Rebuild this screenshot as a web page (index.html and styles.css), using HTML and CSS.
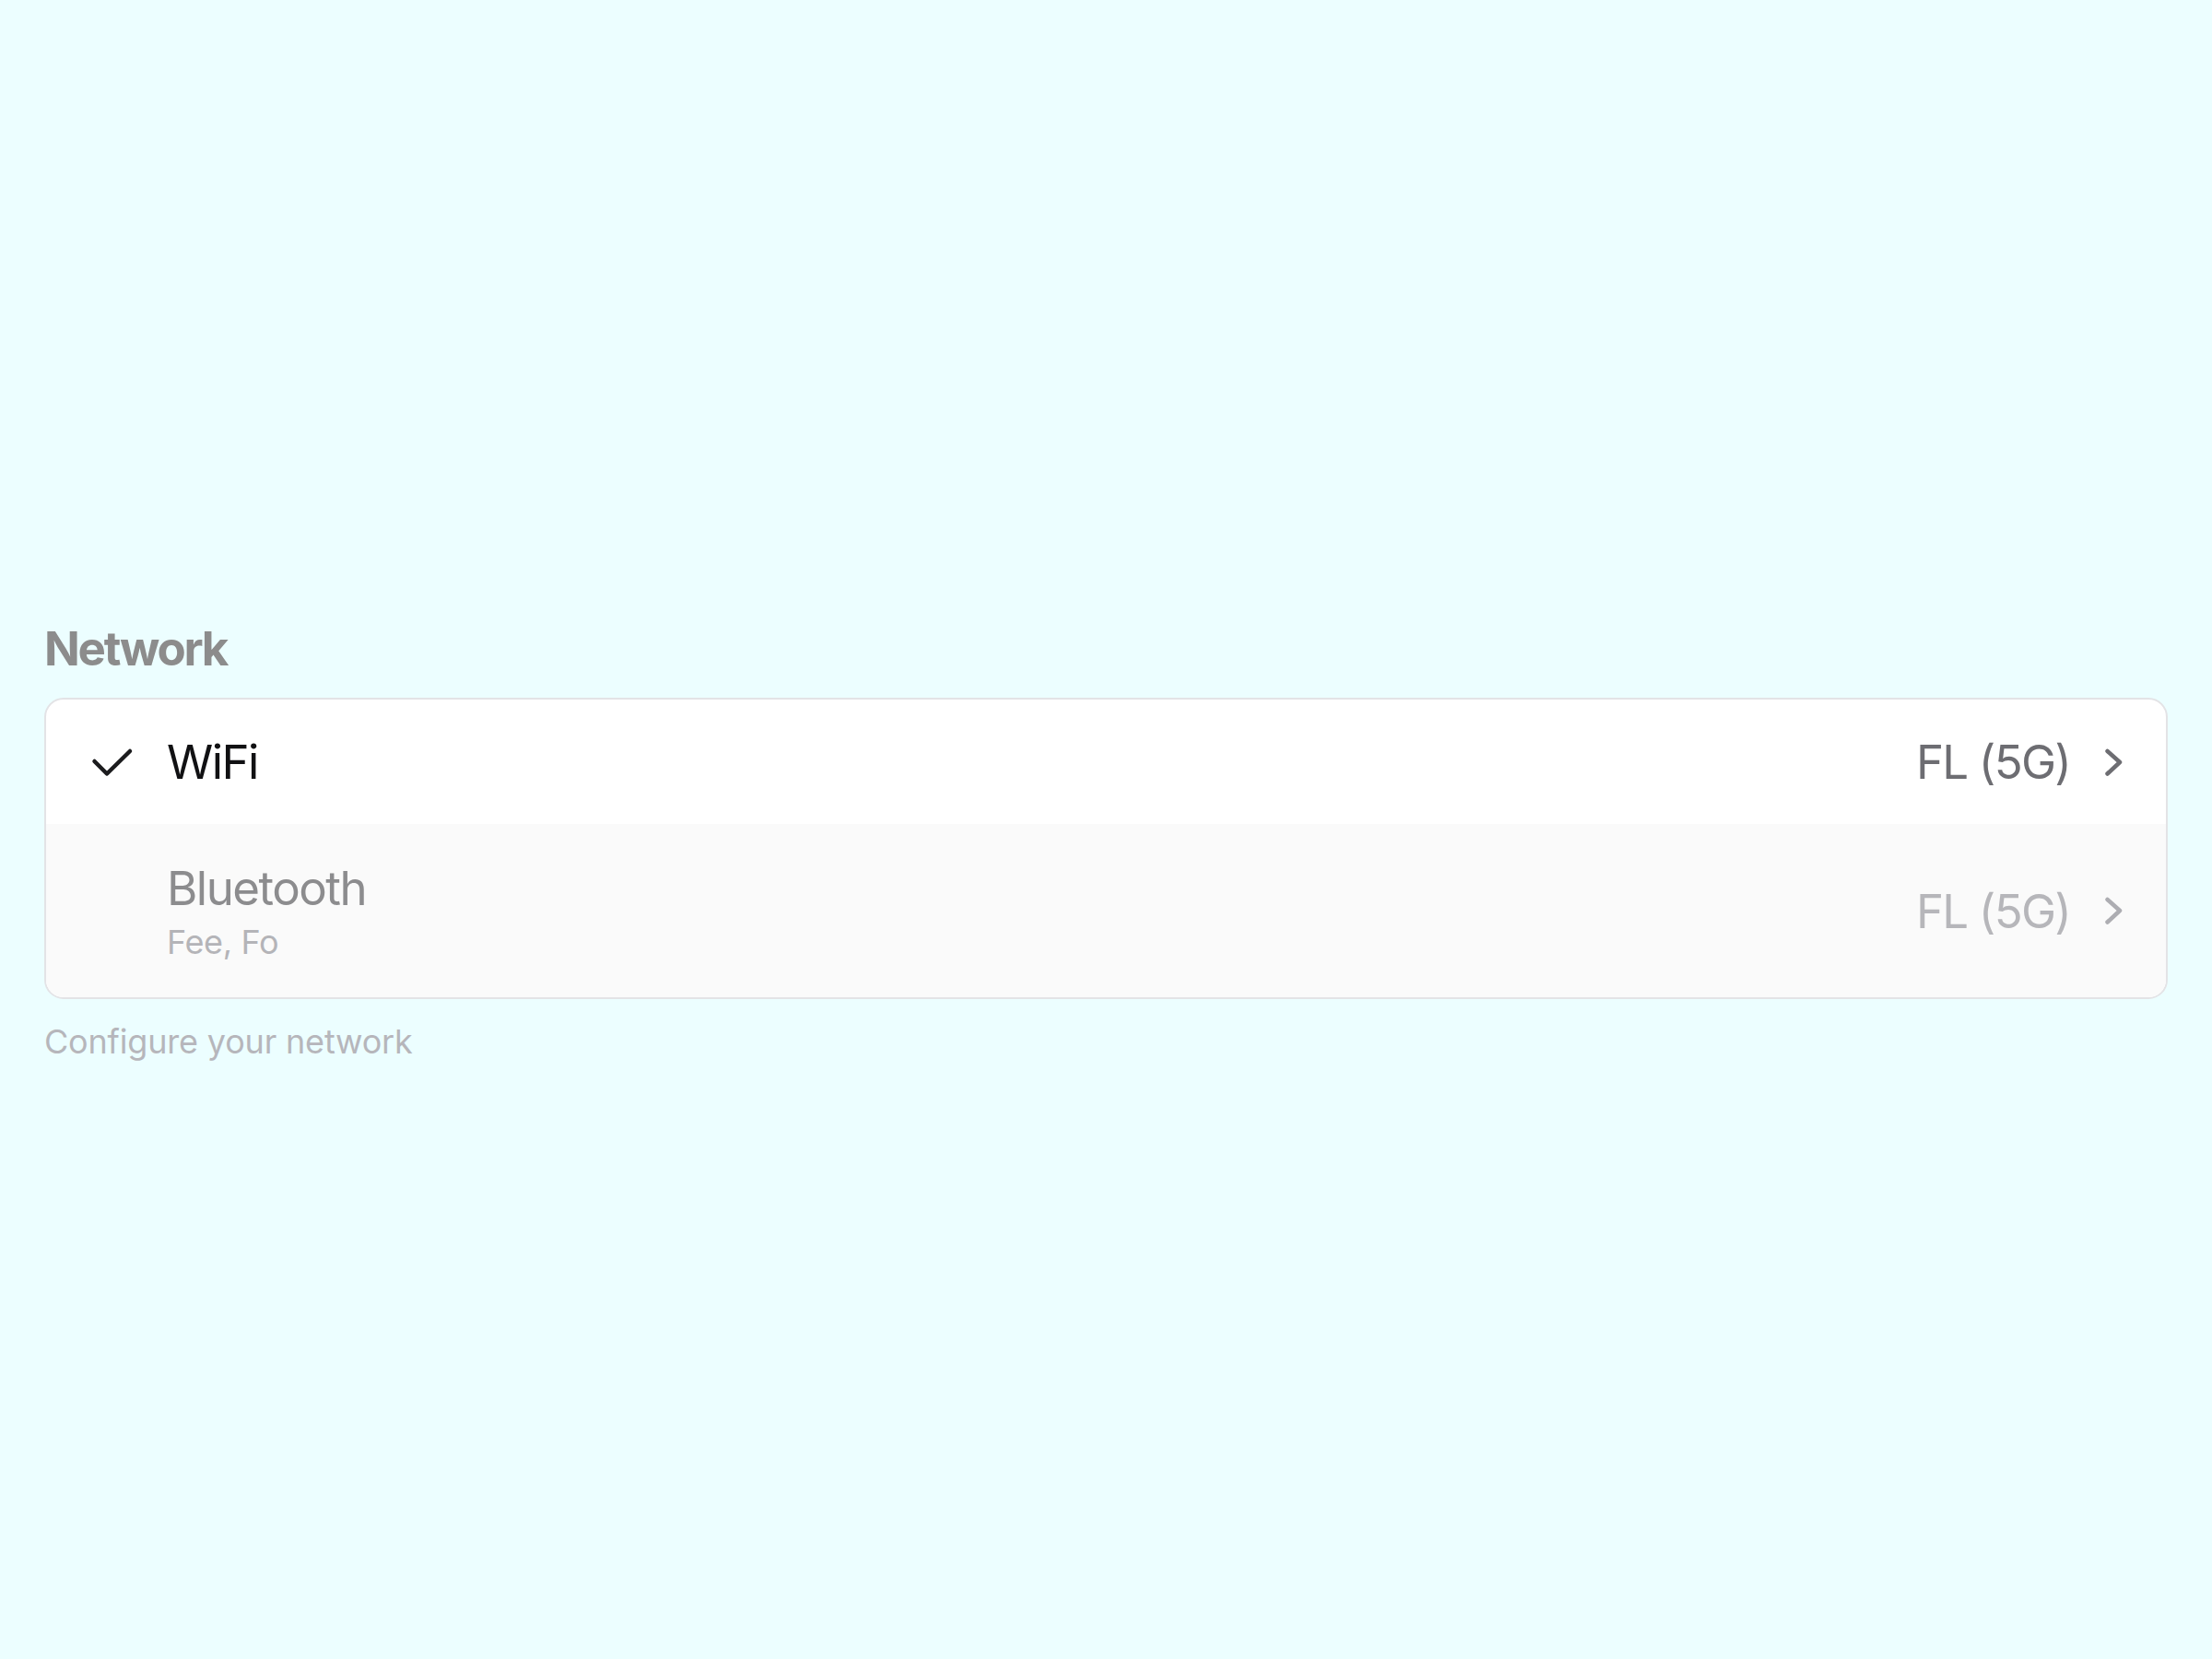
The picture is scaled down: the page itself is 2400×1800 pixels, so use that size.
FILE: index.html
```html
<!DOCTYPE html>
<html lang="en">
<head>
<meta charset="utf-8">
<title>Network</title>
<link rel="stylesheet" href="styles.css">
</head>
<body>
<main class="page">
  <section class="group">
    <h2 class="group-title">Network</h2>
    <div class="card">
      <div class="row row-active">
        <span class="row-icon">
          <svg width="46" height="34" viewBox="0 0 46 34"><path d="M3.5 16 L17 29.5 L42 5" fill="none" stroke="#1c1c1e" stroke-width="4.5" stroke-linecap="round" stroke-linejoin="round"/></svg>
        </span>
        <span class="row-label">WiFi</span>
        <span class="row-value">FL (5G)</span>
        <svg class="chev" width="25" height="34" viewBox="0 0 25 34"><path d="M5.5 5 L19 17 L5.5 29.5" fill="none" stroke="currentColor" stroke-width="4.5" stroke-linecap="round" stroke-linejoin="round"/></svg>
      </div>
      <div class="row row-disabled">
        <span class="row-icon"></span>
        <span class="row-text">
          <span class="row-label">Bluetooth</span>
          <span class="row-sub">Fee, Fo</span>
        </span>
        <span class="row-value">FL (5G)</span>
        <svg class="chev" width="25" height="34" viewBox="0 0 25 34"><path d="M5.5 5 L19 17 L5.5 29.5" fill="none" stroke="currentColor" stroke-width="4.5" stroke-linecap="round" stroke-linejoin="round"/></svg>
      </div>
    </div>
    <p class="group-footer">Configure your network</p>
  </section>
</main>
</body>
</html>
```

FILE: styles.css
```css
html, body {
  margin: 0;
  padding: 0;
}
body {
  background: #ecfeff;
  font-family: Inter, "Noto Sans", "Liberation Sans", sans-serif;
  min-height: 100vh;
}
.page {
  padding: 673px 48px 0 48px;
}
.group-title {
  margin: 0 0 23px 0;
  font-size: 51px;
  line-height: 61px;
  font-weight: 700;
  letter-spacing: -0.045em;
  color: #8c8c8c;
}
.card {
  background: #ffffff;
  border: 2px solid #e3e3e6;
  border-radius: 21px;
  overflow: hidden;
}
.row {
  display: flex;
  align-items: center;
  padding-left: 50px;
  padding-right: 44px;
}
.row-active {
  padding-top: 37px;
  padding-bottom: 37px;
  color: #111113;
}
.row-disabled {
  background: #fafafa;
  padding-top: 38.5px;
  padding-bottom: 38.5px;
}
.row-icon {
  width: 82px;
  flex: none;
  display: flex;
  align-items: center;
  margin-left: -1px;
}
.row-icon svg {
  display: block;
}
.row-label {
  font-size: 51px;
  line-height: 61px;
  letter-spacing: -0.03em;
  display: block;
}
.row-text {
  display: flex;
  flex-direction: column;
}
.row-disabled .row-label {
  color: #8c8c8e;
}
.row-sub {
  font-size: 36px;
  line-height: 44px;
  margin-top: 6px;
  letter-spacing: -0.01em;
  color: #b4b4b8;
}
.row-value {
  margin-left: auto;
  font-size: 51px;
  line-height: 61px;
  letter-spacing: -0.035em;
  color: #6d6d72;
}
.row-disabled .row-value {
  color: #b6b6ba;
}
.chev {
  display: block;
  margin-left: 35px;
  color: #6d6d72;
}
.row-disabled .chev {
  color: #adadb2;
}
.group-footer {
  margin: 24px 0 0 0;
  font-size: 36px;
  line-height: 44px;
  letter-spacing: -0.005em;
  color: #b6b6bb;
}
```
